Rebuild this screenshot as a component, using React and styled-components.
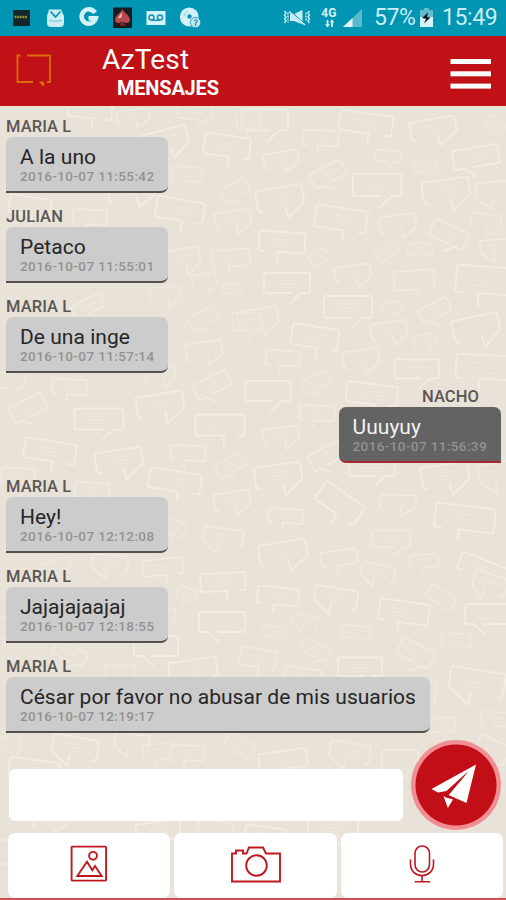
import styled, { createGlobalStyle } from "styled-components";

const messages = [
	{ author: "MARIA L", text: "A la uno", date: "2016-10-07 11:55:42" },
	{ author: "JULIAN", text: "Petaco", date: "2016-10-07 11:55:01" },
	{ author: "MARIA L", text: "De una inge", date: "2016-10-07 11:57:14" },
	{ author: "NACHO", text: "Uuuyuy", date: "2016-10-07 11:56:39", own: true },
	{ author: "MARIA L", text: "Hey!", date: "2016-10-07 12:12:08" },
	{ author: "MARIA L", text: "Jajajajaajaj", date: "2016-10-07 12:18:55" },
	{ author: "MARIA L", text: "César por favor no abusar de mis usuarios", date: "2016-10-07 12:19:17" },
];

// x, y, width, height, rotation, tail shape
const doodles = [
	[265, 120, 46, 21, 0, "A"], [366, 123, 53, 20, 8, "D"], [321, 138, 35, 15, 3, "C"], [433, 128, 46, 18, -10, "B"],
	[495, 125, 20, 11, 35, "A"], [281, 159, 35, 14, -10, "B"], [388, 156, 26, 11, 3, "A"], [425, 167, 23, 10, 0, "A"],
	[476, 157, 46, 19, -10, "E"], [328, 174, 35, 16, -27, "E"], [377, 185, 49, 22, 0, "A"], [446, 190, 47, 21, -8, "B"],
	[494, 191, 36, 18, -5, "F"], [280, 198, 47, 21, -10, "B"], [341, 219, 52, 22, 9, "D"], [398, 223, 36, 16, -7, "B"],
	[449, 234, 37, 18, 25, "A"], [486, 221, 30, 14, 6, "B"], [282, 242, 46, 20, 4, "C"], [319, 257, 19, 12, -30, "E"],
	[387, 252, 22, 12, -27, "E"], [420, 249, 25, 11, 0, "A"], [497, 247, 34, 15, -3, "F"], [287, 283, 46, 20, 0, "A"],
	[353, 273, 36, 15, -8, "B"], [414, 280, 40, 19, -4, "D"], [484, 280, 56, 27, 4, "C"], [348, 307, 48, 22, 0, "A"],
	[392, 307, 19, 10, -5, "B"], [435, 310, 31, 15, -25, "E"], [258, 318, 40, 18, -10, "B"], [315, 337, 47, 21, 9, "D"],
	[389, 330, 36, 16, -8, "B"], [425, 340, 23, 11, -12, "B"], [476, 327, 47, 21, -12, "B"], [283, 358, 34, 15, 3, "C"],
	[361, 358, 36, 16, -8, "B"], [417, 369, 44, 19, 0, "A"], [485, 367, 58, 24, 3, "C"], [268, 391, 45, 20, 0, "A"],
	[316, 382, 29, 13, -25, "E"], [372, 394, 51, 20, 7, "D"], [317, 413, 35, 15, 3, "C"], [281, 435, 36, 15, -8, "B"],
	[326, 456, 34, 17, -27, "E"], [278, 475, 47, 21, -8, "B"], [372, 467, 46, 18, 0, "A"], [445, 475, 47, 21, -8, "B"],
	[497, 473, 36, 20, -10, "F"], [340, 503, 47, 22, 35, "D"], [398, 502, 36, 14, 1, "B"], [286, 516, 35, 14, 3, "C"],
	[465, 518, 60, 24, 7, "C"], [391, 539, 38, 17, 0, "A"], [283, 552, 48, 20, -9, "B"], [339, 558, 36, 15, -8, "C"],
	[378, 572, 34, 15, 12, "F"], [424, 561, 30, 13, -5, "C"], [483, 569, 50, 18, 22, "C"], [278, 596, 41, 17, 6, "C"],
	[336, 597, 43, 18, 10, "F"], [404, 612, 50, 21, 8, "C"], [441, 597, 29, 14, 28, "A"], [490, 583, 34, 18, 20, "F"],
	[487, 614, 44, 20, 0, "E"], [305, 621, 26, 11, 8, "F"], [274, 631, 23, 10, 5, "A"], [356, 632, 30, 12, 5, "A"],
	[316, 650, 30, 13, 25, "A"], [416, 653, 36, 18, 27, "A"], [456, 640, 30, 13, 0, "A"], [360, 667, 44, 19, 0, "A"],
	[258, 658, 36, 18, 10, "D"], [477, 682, 55, 24, 9, "F"], [496, 719, 30, 14, 2, "C"], [440, 725, 30, 14, -4, "A"],
	[303, 676, 36, 16, 8, "C"], [424, 692, 24, 26, 10, "D"], [283, 760, 48, 18, -8, "C"], [350, 752, 40, 18, 10, "F"],
	[400, 760, 36, 20, 0, "A"], [492, 750, 32, 20, 25, "D"], [333, 827, 50, 18, -3, "A"], [266, 836, 42, 18, 8, "D"],
	[75, 747, 46, 20, 10, "F"], [7, 745, 26, 16, -20, "B"], [132, 742, 34, 16, 8, "F"], [158, 752, 30, 16, -5, "C"],
	[187, 753, 34, 15, 1, "C"], [34, 770, 50, 20, 8, "D"], [0, 804, 22, 24, 0, "E"], [-8, 852, 40, 24, 0, "C"],
	[158, 830, 44, 16, -8, "B"], [215, 830, 34, 18, 10, "F"], [240, 745, 30, 14, 30, "C"], [50, 822, 34, 10, 0, "B"],
	[165, 140, 46, 20, -15, "B"], [227, 146, 46, 21, 8, "D"], [187, 174, 30, 14, 3, "C"], [235, 190, 28, 14, -27, "E"],
	[180, 210, 48, 21, 10, "D"], [233, 219, 36, 16, -7, "B"], [90, 217, 34, 15, 3, "C"], [182, 258, 36, 18, -10, "B"],
	[231, 258, 38, 17, -5, "C"], [204, 280, 25, 13, -12, "B"], [249, 119, 24, 19, 0, "C"], [232, 289, 20, 9, 0, "A"],
	[165, 294, 30, 14, -4, "B"], [132, 190, 48, 18, -8, "B"], [30, 206, 42, 18, 10, "D"], [88, 306, 32, 14, -27, "E"],
	[203, 318, 30, 14, -27, "E"], [246, 322, 28, 18, 0, "A"], [204, 350, 36, 16, -8, "B"],
	[70, 387, 35, 15, 3, "C"], [10, 380, 30, 15, -3, "A"], [28, 408, 36, 17, -27, "E"], [99, 419, 49, 21, 0, "A"],
	[160, 404, 47, 20, -9, "B"], [212, 385, 37, 17, -27, "E"], [220, 425, 49, 21, 0, "D"],
	[50, 451, 52, 20, 9, "D"], [119, 460, 47, 20, -8, "B"], [188, 453, 35, 15, 3, "C"], [231, 465, 30, 14, -27, "E"],
	[175, 481, 52, 20, 9, "D"], [18, 475, 34, 14, 3, "C"], [160, 374, 30, 15, -8, "B"], [232, 500, 36, 16, -8, "B"],
	[92, 490, 34, 15, 3, "C"], [223, 537, 40, 17, 8, "F"], [175, 528, 20, 14, 20, "D"], [163, 567, 40, 16, -6, "D"],
	[110, 563, 36, 16, 5, "F"], [55, 567, 30, 12, -20, "E"], [223, 582, 45, 18, -3, "D"], [187, 594, 20, 12, 20, "C"],
	[222, 622, 46, 20, 0, "E"], [156, 646, 44, 20, 0, "E"], [193, 670, 48, 20, -8, "B"],
	[120, 672, 30, 14, 0, "A"], [70, 653, 34, 15, 25, "A"], [3, 627, 20, 20, 0, "D"], [90, 110, 44, 16, 6, "D"],
	[133, 116, 32, 12, -6, "B"], [195, 112, 34, 14, 3, "A"], [164, 615, 22, 14, 5, "D"],
];

const doodlePath = (w, h, kind) => {
	if (kind === "A" || kind === "E") {
		return `M${w * 0.58} ${h}H2Q0 ${h} 0 ${h - 2}V2Q0 0 2 0H${w - 2}Q${w} 0 ${w} 2V${h - 2}Q${w} ${h} ${w - 2} ${h}H${w * 0.8}L${w * 0.57} ${h * 1.5}`;
	}
	if (kind === "B" || kind === "F") {
		return `M${w * 0.08} ${h * 1.05}Q0 ${h} 0 ${h - 3}V2Q0 0 2 0H${w - 2}Q${w} 0 ${w} 2V${h * 0.85}L${w * 0.6} ${h * 1.5}L${w * 0.58} ${h * 0.95}`;
	}
	return `M${w * 0.12} ${h}H2Q0 ${h} 0 ${h - 2}V2Q0 0 2 0H${w - 2}Q${w} 0 ${w} 2V${h - 2}Q${w} ${h} ${w - 2} ${h}H${w * 0.42}V${h * 1.5}`;
};

const Wallpaper = () => (
	<WallpaperSvg viewBox="0 106 506 794">
		{doodles.map(([x, y, w, h, angle, kind], i) => {
			const flip = "DEF".includes(kind) ? " scale(-1 1)" : "";
			return (
				<g
					key={i}
					transform={`translate(${x} ${y}) rotate(${angle})${flip} translate(${-w / 2} ${-h / 2})`}
					opacity={w > 40 ? 0.95 : w > 30 ? 0.75 : 0.55}
				>
					<path d={doodlePath(w, h, kind)} strokeWidth={w > 40 ? 1.9 : 1.7} />
					<path
						d={`M${w * 0.26} ${h * 0.36}H${w * 0.76}M${w * 0.24} ${h * 0.54}H${w * 0.72}M${w * 0.3} ${h * 0.72}H${w * 0.7}`}
						strokeWidth="1"
						opacity="0.55"
					/>
				</g>
			);
		})}
	</WallpaperSvg>
);

const NotificationIcons = () => (
	<svg width="202" height="24" viewBox="0 6 202 24">
		<rect x="13" y="10" width="17" height="16" fill="#13262c" />
		<path d="M14.500 17H27.500" stroke="#8d8f39" strokeWidth="2.4" strokeDasharray="2 .6" />
		<path d="M49 9.500H61L64 16V23Q64 27 60 27H51Q47 27 47 23V16Z" fill="#c9edf5" />
		<path d="M50.500 11.500L55.500 17L60.500 11.500" fill="none" stroke="#1393b0" strokeWidth="1.800" />
		<path d="M49 20.500Q55.500 22 62 20.500" fill="none" stroke="#6fc0d2" strokeWidth="1" />
		<path d="M95 12.800A7.200 7.200 0 1 0 95.800 18.300H88.500" fill="none" stroke="#d3f2f8" strokeWidth="4.600" />
		<rect x="113" y="7.500" width="19" height="20.500" rx="1" fill="#151d22" />
		<path d="M122.500 9C124 13 130 15.500 130 20C130 23.500 125.500 24 123.500 21.500L125 26H120.500L121.800 21.500C119.500 24 115 23.500 115 20C115 15.500 121 13 122.500 9Z" fill="#b9484c" />
		<path d="M122 12L117.500 18.500L121.500 17.500Z" fill="#f2c3c0" />
		<path d="M121 22L119.500 26H125L123 22Z" fill="#7e1e22" />
		<rect x="146.500" y="11" width="19" height="14" fill="#d3f2f8" />
		<g fill="none" stroke="#1393b0" strokeWidth="1.500">
			<circle cx="151.500" cy="17.500" r="2.500" />
			<circle cx="160" cy="17.500" r="2.500" />
			<path d="M151.500 20.300H160" />
		</g>
		<circle cx="189.300" cy="17" r="9.400" fill="#d3f2f8" />
		<circle cx="189.500" cy="16.500" r="2.200" fill="#1393b0" />
		<path d="M184 16A5.500 5.500 0 0 1 188 11" fill="none" stroke="#8fd0df" />
		<circle cx="195.500" cy="22.500" r="5.200" fill="#bfe8f1" stroke="#1393b0" strokeWidth=".8" />
		<path d="M194 20.500Q197.500 19 197.300 21.500L195.500 23V26" fill="none" stroke="#2b9bb5" strokeWidth="1.300" />
	</svg>
);

const StatusIcons = () => (
	<svg width="82" height="24" viewBox="281 6 82 24">
		<g fill="none" stroke="#c9edf5" strokeWidth="1.400">
			<path d="M283.500 11l1.500 2-1.500 2 1.500 2-1.500 2 1.500 2-1.500 2M308.500 11l-1.500 2 1.500 2-1.500 2 1.500 2-1.500 2 1.500 2" />
			<path d="M287 12.500v10M305 12.500v9" strokeDasharray="2 1" />
		</g>
		<path d="M289 14H293L301.500 10V24.500L293 21H289Z" fill="#c9edf5" />
		<path d="M288 10.500L303 24" stroke="#0095b3" strokeWidth="2.200" />
		<path d="M288 11.500L304 25" stroke="#d3f2f8" strokeWidth="1.600" />
		<path d="M326.500 20V27M331 20V27" stroke="#d3f2f8" strokeWidth="1.800" />
		<path d="M324 24h5l-2.500 3zM328.700 22.500h4.600l-2.300-3z" fill="#d3f2f8" />
		<path d="M342 27L361 9V27Z" fill="#5bb9cd" />
		<path d="M342 27L351.500 18V27Z" fill="#e2f7fa" />
		<text x="320.300" y="16.500" fontSize="12" fontWeight="700" fill="#d3f2f8" fontFamily="Roboto">4G</text>
	</svg>
);

const BatteryIcon = () => (
	<svg width="15" height="20" viewBox="0 0 15 20">
		<path d="M5 0H10V2H14V19H1V2H5Z" fill="#62bccd" />
		<path d="M1 9H14V19H1Z" fill="#d8f3f7" />
		<path d="M9 4.500L3 10L7 10.700L5 15.500L11.500 9.500L8 9Z" fill="#071a20" />
	</svg>
);

const LogoIcon = () => (
	<svg width="38" height="38" viewBox="0 0 38 38" fill="none" stroke="#d96e0a" strokeWidth="1.800">
		<path d="M5.500 3.500H2.500V30H18M12 3.500H35V30H32" />
		<path d="M24.500 30H28.500V34Z" fill="#d96e0a" strokeWidth="1" />
	</svg>
);

const MenuIcon = () => (
	<svg width="42" height="32" viewBox="0 0 42 32" fill="#fff">
		<rect x="0.500" y="1" width="40.500" height="5" />
		<rect x="0.500" y="13.300" width="40.500" height="5" />
		<rect x="0.500" y="25.600" width="40.500" height="5" />
	</svg>
);

const PlaneIcon = () => (
	<svg width="90" height="90" viewBox="411 740 90 90" fill="#fff">
		<path d="M476 764.500L431.500 789L438 792.500L446.500 791L468 772L448.500 795L466.500 803Z" />
		<path d="M443.500 796L446 797.500L453 799.500L447.800 808Z" />
		<path d="M468 771.500L444.500 793L448.500 795Z" fill="#c20f17" />
	</svg>
);

const PictureIcon = () => (
	<svg width="38" height="38" viewBox="0 0 38 38" fill="none" stroke="#bd1a20">
		<rect x="1.600" y="1.600" width="34.500" height="34" rx=".8" strokeWidth="1.900" />
		<circle cx="23" cy="10.800" r="3.900" strokeWidth="1.900" />
		<path d="M7.300 31L17 16.800L22.300 25.200L25 21L31.700 31Z" strokeWidth="1.900" />
	</svg>
);

const CameraIcon = () => (
	<svg width="52" height="40" viewBox="0 0 52 40" fill="none" stroke="#bd1a20" strokeWidth="1.900">
		<path d="M2 37.500V9.500H6V6.500H13V9.500H16.500L19 3.500H33L36 9.500H50V37.500Z" />
		<circle cx="26.500" cy="21.500" r="10.300" />
	</svg>
);

const MicIcon = () => (
	<svg width="26" height="38" viewBox="0 0 26 38" fill="none" stroke="#bd1a20" strokeWidth="1.600">
		<rect x="6" y="1" width="14.500" height="26" rx="7.200" />
		<path d="M1.500 14.500V19C1.500 26 6.500 30.500 13 30.500S24.500 26 24.500 19V14.500M13 30.500V36.500M5.500 36.700H21" />
	</svg>
);

const App = () => (
	<>
		<GlobalStyle />
		<Screen>
			<StatusBar>
				<Notifications>
					<NotificationIcons />
				</Notifications>
				<StatusIcons />
				<StatusText $gap={10} $width={45}>57%</StatusText>
				<BatteryIcon />
				<StatusText $gap={8} $width={56}>15:49</StatusText>
			</StatusBar>
			<Header>
				<LogoIcon />
				<Titles>
					<AppName>AzTest</AppName>
					<Section>MENSAJES</Section>
				</Titles>
				<MenuButton aria-label="Menu">
					<MenuIcon />
				</MenuButton>
			</Header>
			<Chat>
				<Wallpaper />
				<MessageList>
					{messages.map((message) => (
						<Message key={message.date} $own={message.own}>
							<Author $own={message.own}>{message.author}</Author>
							<Bubble $own={message.own}>
								<MessageText $own={message.own}>{message.text}</MessageText>
								<MessageDate>{message.date}</MessageDate>
							</Bubble>
						</Message>
					))}
				</MessageList>
				<Composer>
					<Input />
					<SendButton aria-label="Enviar">
						<PlaneIcon />
					</SendButton>
				</Composer>
				<Attachments>
					<AttachButton aria-label="Imagen">
						<PictureIcon />
					</AttachButton>
					<AttachButton aria-label="Foto">
						<CameraIcon />
					</AttachButton>
					<AttachButton aria-label="Audio">
						<MicIcon />
					</AttachButton>
				</Attachments>
			</Chat>
		</Screen>
	</>
);

export default App;

const GlobalStyle = createGlobalStyle`
	* {
		box-sizing: border-box;
	}

	body {
		margin: 0;
		font-family: Roboto, sans-serif;
	}

	svg {
		display: block;
		flex: none;
	}

	button {
		border: 0;
		padding: 0;
		display: flex;
		align-items: center;
		justify-content: center;
	}
`;

const Screen = styled.div`
	width: 506px;
	height: 900px;
	display: flex;
	flex-direction: column;
	overflow: hidden;
`;

const StatusBar = styled.div`
	display: flex;
	align-items: center;
	height: 36px;
	padding-right: 8px;
	background: #0095b3;
`;

const Notifications = styled.div`
	flex: 1;
`;

const StatusText = styled.span`
	width: ${(props) => props.$width}px;
	margin-left: ${(props) => props.$gap}px;
	font-size: 23px;
	letter-spacing: -0.4px;
	line-height: 38px;
	color: #c9edf5;
	white-space: nowrap;
`;

const Header = styled.header`
	display: flex;
	align-items: center;
	height: 70px;
	padding: 0 14px 0 15px;
	background: #c01117;
`;

const Titles = styled.div`
	flex: 1;
	display: flex;
	flex-direction: column;
	padding-left: 49px;
	color: #fff;
`;

const AppName = styled.h1`
	margin: 7px 0 0;
	font-size: 28px;
	font-weight: 400;
	letter-spacing: 0.2px;
	line-height: 32px;
`;

const Section = styled.h2`
	margin: 0 0 4px 15px;
	font-size: 20px;
	font-weight: 700;
	letter-spacing: -0.2px;
	line-height: 25px;
`;

const MenuButton = styled.button`
	background: none;
	margin-top: 6px;
`;

const Chat = styled.main`
	position: relative;
	flex: 1;
	display: flex;
	flex-direction: column;
	background: #e8e2d8;
`;

const WallpaperSvg = styled.svg`
	position: absolute;
	top: 0;
	left: 0;
	width: 506px;
	height: 794px;
	fill: #e9e3d9;
	stroke: #f4ede3;
	stroke-linecap: round;
	stroke-linejoin: round;
`;

const MessageList = styled.div`
	position: relative;
	height: 634px;
	padding: 10px 5px 0 6px;
`;

const Message = styled.div`
	display: flex;
	flex-direction: column;
	align-items: ${(props) => (props.$own ? "flex-end" : "flex-start")};
	height: 90px;
`;

const Author = styled.span`
	height: 21px;
	padding-right: ${(props) => (props.$own ? "22px" : "0")};
	font-size: 16.5px;
	font-weight: 500;
	letter-spacing: 0.1px;
	line-height: 22px;
	color: #5a5754;
`;

const Bubble = styled.div`
	height: 56px;
	padding: 8px 14px 0;
	background: ${(props) => (props.$own ? "#636363" : "#cccccc")};
	border-bottom: 2px solid ${(props) => (props.$own ? "#a52a30" : "#55504e")};
	border-radius: ${(props) => (props.$own ? "7px 7px 0 7px" : "7px 7px 7px 0")};
`;

const MessageText = styled.p`
	margin: 0;
	font-size: 21px;
	letter-spacing: 0.03px;
	line-height: 24px;
	color: ${(props) => (props.$own ? "#f2f2f2" : "#262626")};
`;

const MessageDate = styled.p`
	margin: 0;
	font-size: 13.5px;
	font-weight: 500;
	line-height: 14px;
	letter-spacing: 0.39px;
	color: #929292;
`;

const Composer = styled.div`
	position: relative;
	display: flex;
	align-items: center;
	height: 90px;
	padding: 0 5px 0 9px;
	gap: 8px;
`;

const Input = styled.input`
	flex: 1;
	height: 52px;
	margin-top: 19px;
	border: 0;
	border-radius: 6px;
	background: #fff;
`;

const SendButton = styled.button`
	width: 90px;
	height: 90px;
	border-radius: 50%;
	background: radial-gradient(circle, #c20f17 40px, #f18e94 41px);
`;

const Attachments = styled.div`
	position: relative;
	display: grid;
	grid-template-columns: 162px 163px 162px;
	gap: 4px;
	flex: 1;
	padding: 3px 0 0 8px;
	border-bottom: 2px solid #cc5054;
`;

const AttachButton = styled.button`
	border-radius: 7px;
	background: #fff;
	padding-bottom: 3px;
`;
